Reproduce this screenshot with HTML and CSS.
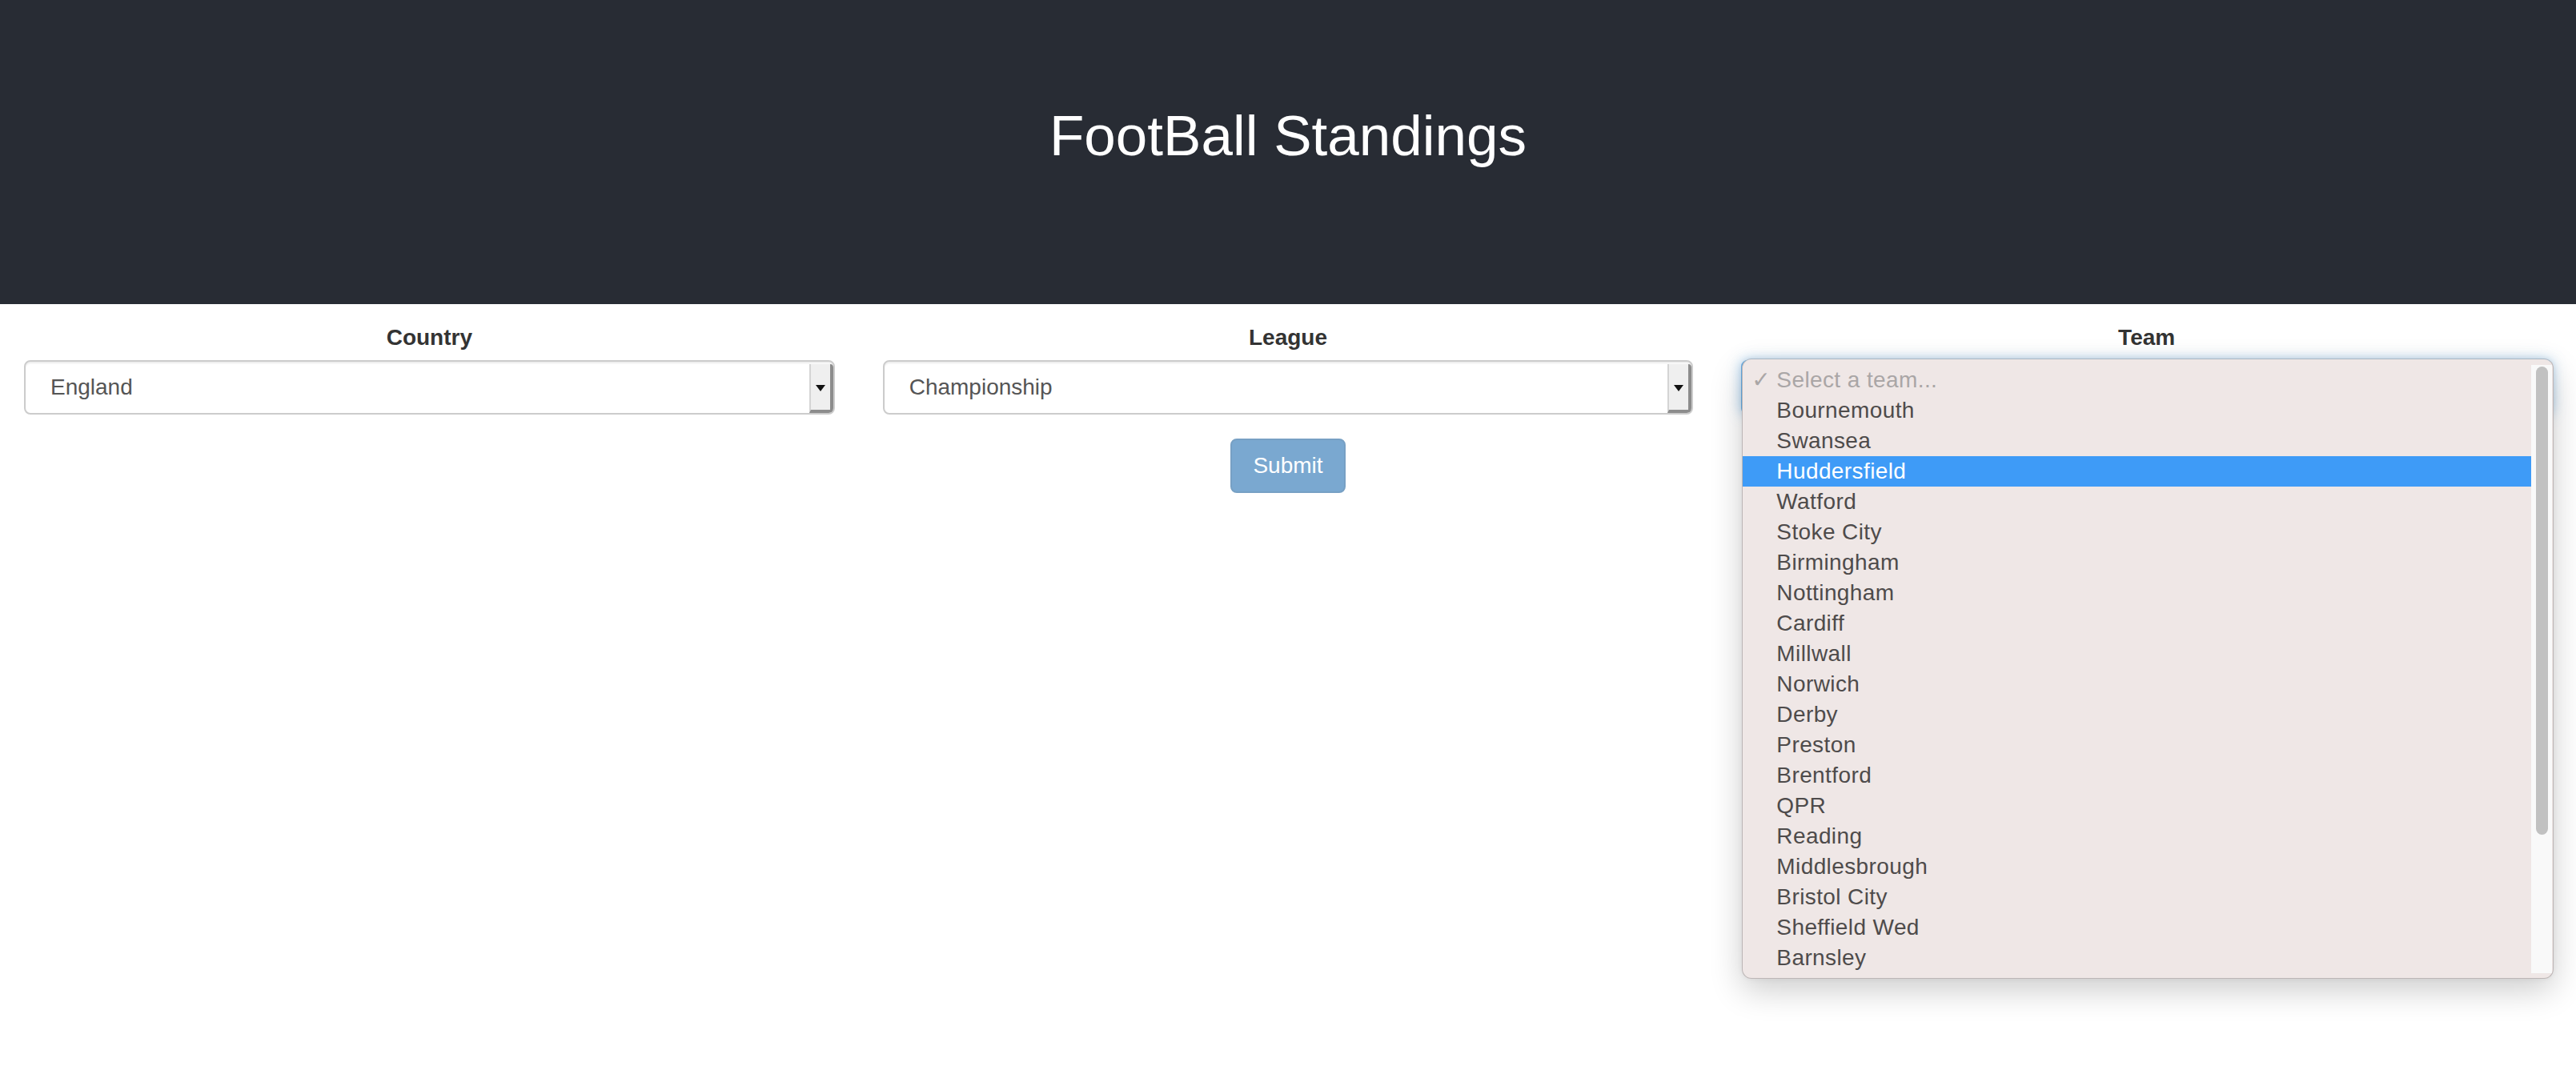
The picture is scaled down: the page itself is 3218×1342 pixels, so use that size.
FILE: index.html
```html
<!DOCTYPE html>
<html lang="en">
<head>
<meta charset="utf-8">
<title>FootBall Standings</title>
<link rel="stylesheet" href="styles.css">
</head>
<body>
<header class="app-header">
  <h1 class="app-title">FootBall Standings</h1>
</header>
<main class="form-row">
  <div class="col">
    <label class="field-label">Country</label>
    <div class="select">
      <span class="select-value">England</span>
      <span class="select-arrow"><span class="triangle"></span></span>
    </div>
  </div>
  <div class="col">
    <label class="field-label">League</label>
    <div class="select">
      <span class="select-value">Championship</span>
      <span class="select-arrow"><span class="triangle"></span></span>
    </div>
    <button class="btn-submit" disabled>Submit</button>
  </div>
  <div class="col">
    <label class="field-label">Team</label>
    <div class="select-wrap">
      <div class="select focused">
        <span class="select-value"></span>
        <span class="select-arrow"><span class="triangle"></span></span>
      </div>
      <div class="popup">
        <ul class="popup-list">
          <li class="opt placeholder"><span class="check">✓</span><span>Select a team...</span></li>
          <li class="opt"><span class="check"></span><span>Bournemouth</span></li>
          <li class="opt"><span class="check"></span><span>Swansea</span></li>
          <li class="opt active"><span class="check"></span><span>Huddersfield</span></li>
          <li class="opt"><span class="check"></span><span>Watford</span></li>
          <li class="opt"><span class="check"></span><span>Stoke City</span></li>
          <li class="opt"><span class="check"></span><span>Birmingham</span></li>
          <li class="opt"><span class="check"></span><span>Nottingham</span></li>
          <li class="opt"><span class="check"></span><span>Cardiff</span></li>
          <li class="opt"><span class="check"></span><span>Millwall</span></li>
          <li class="opt"><span class="check"></span><span>Norwich</span></li>
          <li class="opt"><span class="check"></span><span>Derby</span></li>
          <li class="opt"><span class="check"></span><span>Preston</span></li>
          <li class="opt"><span class="check"></span><span>Brentford</span></li>
          <li class="opt"><span class="check"></span><span>QPR</span></li>
          <li class="opt"><span class="check"></span><span>Reading</span></li>
          <li class="opt"><span class="check"></span><span>Middlesbrough</span></li>
          <li class="opt"><span class="check"></span><span>Bristol City</span></li>
          <li class="opt"><span class="check"></span><span>Sheffield Wed</span></li>
          <li class="opt"><span class="check"></span><span>Barnsley</span></li>
        </ul>
        <div class="scroll-track"><div class="scroll-thumb"></div></div>
      </div>
    </div>
  </div>
</main>
</body>
</html>
```
FILE: styles.css
```css
* { box-sizing: border-box; }

html, body {
  margin: 0;
  padding: 0;
  background: #ffffff;
  font-family: "Liberation Sans", Arial, Helvetica, sans-serif;
  color: #333333;
}

body {
  min-height: 100vh;
}

.app-header {
  height: 380px;
  background: #282c34;
  padding-top: 130px;
  text-align: center;
}

.app-title {
  margin: 0;
  font-size: 71px;
  line-height: 80px;
  font-weight: 400;
  color: #ffffff;
}

.form-row {
  display: grid;
  grid-template-columns: 1fr 1fr 1fr;
  margin-top: 22px;
  padding-bottom: 760px;
}

.col {
  padding: 0 30px;
  display: flex;
  flex-direction: column;
  align-items: stretch;
}

.field-label {
  display: block;
  text-align: center;
  font-weight: 700;
  font-size: 28px;
  line-height: 40px;
  margin-bottom: 8px;
  color: #333333;
}

.select {
  display: flex;
  align-items: stretch;
  height: 68px;
  border: 2px solid #cccccc;
  border-radius: 8px;
  background: #ffffff;
  box-shadow: inset 0 2px 2px rgba(0, 0, 0, 0.075);
  overflow: hidden;
}

.select-value {
  flex: 1;
  display: flex;
  align-items: center;
  padding-left: 31px;
  font-size: 28px;
  line-height: 40px;
  color: #555555;
}

.select-arrow {
  width: 30px;
  margin-top: 3px;
  background: #efefef;
  border-left: 2px solid #d4d4d4;
  border-right: 4px solid #8c8c8c;
  border-bottom: 4px solid #8c8c8c;
  border-top-right-radius: 4px;
  display: flex;
  align-items: center;
  justify-content: center;
}

.triangle {
  width: 0;
  height: 0;
  border-left: 6px solid transparent;
  border-right: 6px solid transparent;
  border-top: 8px solid #111111;
  margin-top: 2px;
}

.btn-submit {
  align-self: center;
  margin-top: 30px;
  height: 68px;
  padding: 0 26px;
  border: 2px solid #77a0c4;
  border-radius: 8px;
  background: #7aa8d0;
  color: #ffffff;
  font-family: "Liberation Sans", Arial, Helvetica, sans-serif;
  font-size: 28px;
  line-height: 40px;
}

.select-wrap {
  position: relative;
}

.select.focused {
  border-color: #66afe9;
  box-shadow: inset 0 2px 2px rgba(0, 0, 0, 0.075), 0 0 16px rgba(102, 175, 233, 0.6);
}

.popup {
  position: absolute;
  top: -2px;
  left: 1px;
  right: -2px;
  height: 775px;
  display: flex;
  background: #efe7e6;
  border: 1px solid #bdb6b6;
  border-top-color: #a9b7c4;
  border-radius: 12px;
  box-shadow: 0 14px 40px rgba(0, 0, 0, 0.2), 0 0 6px rgba(0, 0, 0, 0.06);
  overflow: hidden;
}

.popup-list {
  flex: 1;
  list-style: none;
  margin: 0;
  padding: 7px 0 6px 0;
}

.opt {
  display: flex;
  height: 38px;
  font-size: 28px;
  line-height: 38px;
  letter-spacing: 0.4px;
  color: #4e4b4b;
  white-space: nowrap;
}

.opt .check {
  width: 42px;
  padding-left: 11px;
  font-family: "DejaVu Sans", sans-serif;
  font-size: 28px;
  letter-spacing: 0;
}

.opt.placeholder {
  color: #aaa6a6;
}

.opt.active {
  background: #3e9bf7;
  color: #ffffff;
}

.scroll-track {
  width: 26px;
  margin: 7px 1px 6px 0;
  background: #f9f9f9;
  padding-top: 2px;
}

.scroll-thumb {
  width: 15px;
  height: 585px;
  margin-left: 6px;
  border-radius: 8px;
  background: #c1c1c1;
}
```
